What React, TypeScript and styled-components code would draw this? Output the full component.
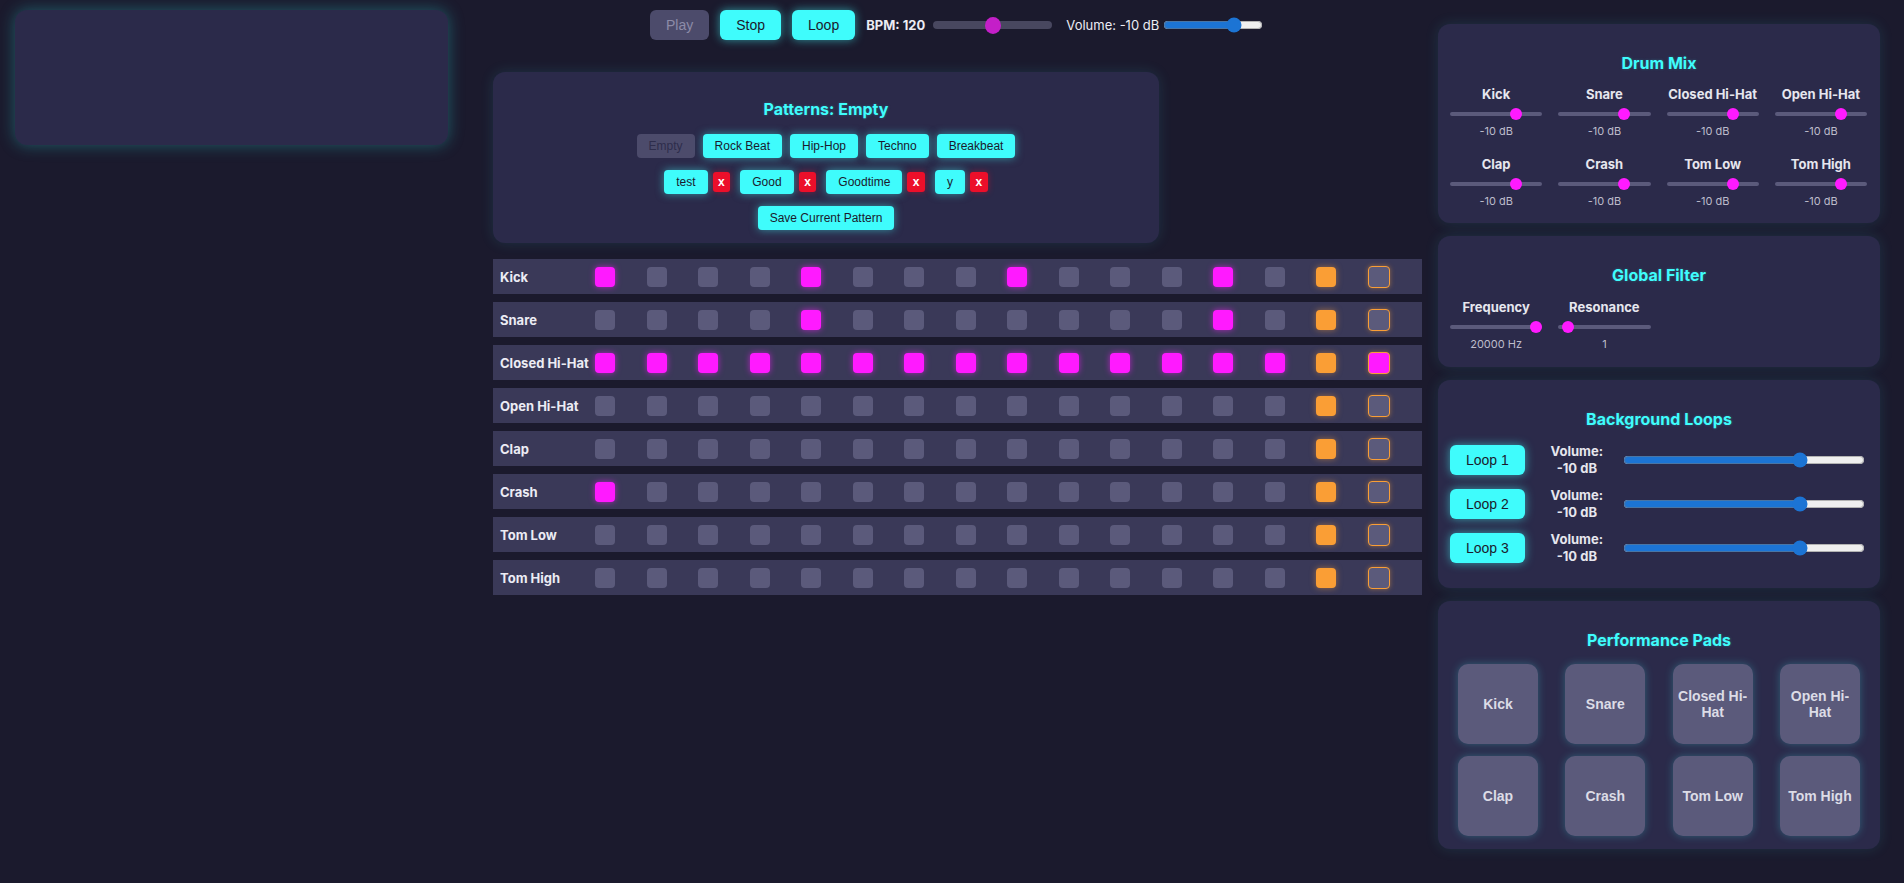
import React from "react";
import styled, { createGlobalStyle, css } from "styled-components";

const GlobalStyle = createGlobalStyle`
  html, body { margin: 0; padding: 0; background: #1b1a2d; }
  body { font-family: Inter, "Liberation Sans", sans-serif; color: #e6e6ee; }
  * { box-sizing: border-box; }
`;

const CYAN = "#3ffcfc";
const MAGENTA = "#ff1aff";
const ORANGE = "#fa9e35";

const Page = styled.div`
  display: flex;
  align-items: flex-start;
  min-height: 883px;
`;

const LeftCol = styled.div`
  flex: none;
  width: 448px;
  padding: 10px 0 0 15px;
`;

const Visualizer = styled.div`
  height: 135px;
  border-radius: 12px;
  background: #2b2a4a;
  box-shadow: 0 0 16px rgba(40, 200, 200, 0.38);
`;

const CenterCol = styled.main`
  flex: none;
  width: 929px;
  margin-left: 45px;
  padding-top: 10px;
`;

const ControlBar = styled.div`
  display: flex;
  align-items: center;
  gap: 11px;
  height: 30px;
  padding-left: 157px;
`;

const Field = styled.div<{ $gap: number; $ml?: number }>`
  display: flex;
  align-items: center;
  gap: ${(p) => p.$gap}px;
  margin-left: ${(p) => p.$ml ?? 0}px;
`;

const MainButton = styled.button<{ $off?: boolean }>`
  font-family: "Liberation Sans", Arial, sans-serif;
  font-size: 14px;
  line-height: 16px;
  padding: 7px 16px;
  border: none;
  border-radius: 6px;
  cursor: pointer;
  ${(p) =>
    p.$off
      ? css`
          background: #4c4b6b;
          color: #8d8ca8;
        `
      : css`
          background: ${CYAN};
          color: #1b1a2d;
          box-shadow: 0 0 10px rgba(63, 252, 252, 0.55);
        `}
`;

const BarLabel = styled.span<{ $bold?: boolean }>`
  font-size: 13px;
  font-weight: ${(p) => (p.$bold ? 700 : 400)};
  color: #ececf4;
  white-space: nowrap;
`;

const BpmSlider = styled.input`
  -webkit-appearance: none;
  appearance: none;
  width: 119px;
  height: 18px;
  margin: 0;
  background: transparent;
  &::-webkit-slider-runnable-track {
    height: 8px;
    border-radius: 4px;
    background: #48475f;
  }
  &::-webkit-slider-thumb {
    -webkit-appearance: none;
    width: 16px;
    height: 17px;
    margin-top: -4.5px;
    border-radius: 50%;
    background: #c41fc8;
  }
`;

const NativeSlider = styled.input<{ $w?: number }>`
  margin: 0;
  accent-color: #1c74d4;
  ${(p) => (p.$w ? `width: ${p.$w}px;` : "flex: 1; min-width: 0;")}
`;

const Panel = styled.section`
  background: #2b2a4a;
  border-radius: 12px;
  box-shadow: 0 0 14px rgba(63, 220, 230, 0.13);
`;

const PatternPanel = styled(Panel)`
  width: 666px;
  margin-top: 32px;
  padding: 25px 0 13px;
  display: flex;
  flex-direction: column;
  align-items: center;
  gap: 12px;
`;

const Title = styled.h2<{ $mb?: number }>`
  margin: 0 0 ${(p) => p.$mb ?? 0}px;
  font-size: 16px;
  line-height: 24px;
  font-weight: 700;
  text-align: center;
  color: ${CYAN};
  text-shadow: 0 0 3px rgba(63, 252, 252, 0.25);
`;

const ButtonRow = styled.div<{ $gap: number }>`
  display: flex;
  justify-content: center;
  gap: ${(p) => p.$gap}px;
`;

const PatternGroup = styled.div`
  display: flex;
  align-items: center;
  gap: 5px;
`;

const PatternButton = styled.button<{ $current?: boolean; $pad?: number }>`
  font-family: "Liberation Sans", Arial, sans-serif;
  font-size: 12px;
  line-height: 14px;
  padding: 5px ${(p) => p.$pad ?? 12}px;
  border: none;
  border-radius: 4px;
  cursor: pointer;
  ${(p) =>
    p.$current
      ? css`
          background: #4c4b6b;
          color: #2e2d4c;
        `
      : css`
          background: ${CYAN};
          color: #1b1a2d;
          box-shadow: 0 0 8px rgba(63, 252, 252, 0.5);
        `}
`;

const DeleteButton = styled.button`
  font-family: "Liberation Sans", Arial, sans-serif;
  font-size: 12px;
  font-weight: 700;
  line-height: 14px;
  padding: 3px 5.5px;
  border: none;
  border-radius: 3px;
  background: #ec0f2a;
  color: #ffffff;
  box-shadow: 0 0 6px rgba(236, 15, 42, 0.45);
`;

const Grid = styled.div`
  margin-top: 16px;
  display: flex;
  flex-direction: column;
  gap: 8px;
`;

const TrackRow = styled.div`
  display: flex;
  align-items: center;
  height: 35px;
  padding-left: 7px;
  background: #3a3958;
`;

const TrackLabel = styled.div`
  flex: none;
  width: 95px;
  font-size: 13px;
  font-weight: 700;
  color: #ececf4;
  white-space: nowrap;
`;

const Steps = styled.div`
  display: flex;
  align-items: center;
  gap: 31.5px;
`;

const Step = styled.div<{ $on: boolean; $playing: boolean; $marked: boolean }>`
  flex: none;
  width: 20px;
  height: 20px;
  border-radius: 4px;
  box-sizing: content-box;
  background: #5b5a7b;
  ${(p) =>
    p.$on &&
    css`
      background: ${MAGENTA};
      box-shadow: 0 0 6px rgba(255, 26, 255, 0.6);
    `}
  ${(p) =>
    p.$playing &&
    css`
      background: ${ORANGE};
      box-shadow: 0 0 6px rgba(250, 158, 53, 0.5);
    `}
  ${(p) =>
    p.$marked &&
    css`
      border: 1px solid ${ORANGE};
      box-shadow: 0 0 5px rgba(250, 158, 53, 0.45);
    `}
`;

const RightCol = styled.aside`
  flex: none;
  width: 442px;
  margin-left: 16px;
  padding-top: 24px;
  display: flex;
  flex-direction: column;
  gap: 13px;
`;

const SidePanel = styled(Panel)<{ $bottom?: number }>`
  padding: 27px 12px ${(p) => p.$bottom ?? 15}px;
`;

const KnobGrid = styled.div`
  display: grid;
  grid-template-columns: repeat(4, 1fr);
  column-gap: 16px;
  row-gap: 16px;
  padding-right: 1px;
`;

const Knob = styled.div`
  display: flex;
  flex-direction: column;
  align-items: center;
  gap: 4px;
`;

const KnobLabel = styled.div`
  font-size: 13px;
  line-height: 20px;
  font-weight: 700;
  color: #e6e6ee;
  white-space: nowrap;
`;

const KnobValue = styled.div`
  font-size: 11px;
  line-height: 14px;
  color: #bdbccb;
`;

const MiniSlider = styled.input`
  -webkit-appearance: none;
  appearance: none;
  width: 100%;
  height: 12px;
  margin: 0;
  background: transparent;
  &::-webkit-slider-runnable-track {
    height: 4px;
    border-radius: 2px;
    background: #5b5a7b;
  }
  &::-webkit-slider-thumb {
    -webkit-appearance: none;
    width: 12px;
    height: 12px;
    margin-top: -4px;
    border-radius: 50%;
    background: ${MAGENTA};
  }
`;

const LoopList = styled.div`
  margin-top: 12px;
  margin-bottom: 8px;
  display: flex;
  flex-direction: column;
  gap: 10px;
`;

const LoopRow = styled.div`
  display: flex;
  align-items: center;
  height: 34px;
  padding-right: 3px;
`;

const LoopVolume = styled.div`
  flex: none;
  width: 82px;
  margin: 0 5px 0 11px;
  text-align: center;
  font-size: 13px;
  line-height: 17px;
  font-weight: 700;
  color: #e6e6ee;
`;

const PadGrid = styled.div`
  margin-top: 12px;
  padding: 0 8px;
  display: grid;
  grid-template-columns: repeat(4, 80px);
  justify-content: space-between;
  row-gap: 12px;
`;

const Pad = styled.button`
  width: 80px;
  height: 80px;
  padding: 0 4px;
  border: none;
  border-radius: 10px;
  background: #5b5a7b;
  box-shadow: 0 0 8px rgba(63, 220, 230, 0.3);
  font-family: "Liberation Sans", Arial, sans-serif;
  font-size: 14px;
  font-weight: 700;
  line-height: 16px;
  color: #dcdce6;
  cursor: pointer;
`;

const DRUMS = [
  "Kick",
  "Snare",
  "Closed Hi-Hat",
  "Open Hi-Hat",
  "Clap",
  "Crash",
  "Tom Low",
  "Tom High",
];

const ACTIVE: Record<string, number[]> = {
  Kick: [0, 4, 8, 12],
  Snare: [4, 12],
  "Closed Hi-Hat": Array.from({ length: 16 }, (_, i) => i),
  "Open Hi-Hat": [],
  Clap: [],
  Crash: [0],
  "Tom Low": [],
  "Tom High": [],
};

const PRESETS = ["Rock Beat", "Hip-Hop", "Techno", "Breakbeat"];
const SAVED = ["test", "Good", "Goodtime", "y"];
const noop = () => {};

export default function App() {
  return (
    <>
      <GlobalStyle />
      <Page>
        <LeftCol>
          <Visualizer />
        </LeftCol>

        <CenterCol>
          <ControlBar>
            <MainButton $off>Play</MainButton>
            <MainButton>Stop</MainButton>
            <MainButton>Loop</MainButton>
            <Field $gap={8}>
              <BarLabel $bold>BPM: 120</BarLabel>
              <BpmSlider type="range" min={60} max={180} value={120} onChange={noop} />
            </Field>
            <Field $gap={4} $ml={3}>
              <BarLabel>Volume: -10 dB</BarLabel>
              <NativeSlider type="range" $w={100} min={-40} max={0} value={-10} onChange={noop} />
            </Field>
          </ControlBar>

          <PatternPanel>
            <Title $mb={1}>Patterns: Empty</Title>
            <ButtonRow $gap={8}>
              <PatternButton $current>Empty</PatternButton>
              {PRESETS.map((p) => (
                <PatternButton key={p}>{p}</PatternButton>
              ))}
            </ButtonRow>
            <ButtonRow $gap={10}>
              {SAVED.map((s) => (
                <PatternGroup key={s}>
                  <PatternButton>{s}</PatternButton>
                  <DeleteButton>x</DeleteButton>
                </PatternGroup>
              ))}
            </ButtonRow>
            <PatternButton $pad={12}>Save Current Pattern</PatternButton>
          </PatternPanel>

          <Grid>
            {DRUMS.map((d) => (
              <TrackRow key={d}>
                <TrackLabel>{d}</TrackLabel>
                <Steps>
                  {Array.from({ length: 16 }, (_, i) => (
                    <Step
                      key={i}
                      $on={ACTIVE[d].includes(i)}
                      $playing={i === 14}
                      $marked={i === 15}
                    />
                  ))}
                </Steps>
              </TrackRow>
            ))}
          </Grid>
        </CenterCol>

        <RightCol>
          <SidePanel>
            <Title $mb={9}>Drum Mix</Title>
            <KnobGrid>
              {DRUMS.map((d) => (
                <Knob key={d}>
                  <KnobLabel>{d}</KnobLabel>
                  <MiniSlider type="range" min={-40} max={0} value={-10} onChange={noop} />
                  <KnobValue>-10 dB</KnobValue>
                </Knob>
              ))}
            </KnobGrid>
          </SidePanel>

          <SidePanel $bottom={16}>
            <Title $mb={10}>Global Filter</Title>
            <KnobGrid>
              <Knob>
                <KnobLabel>Frequency</KnobLabel>
                <MiniSlider type="range" min={20} max={20000} value={20000} onChange={noop} />
                <KnobValue>20000 Hz</KnobValue>
              </Knob>
              <Knob>
                <KnobLabel>Resonance</KnobLabel>
                <MiniSlider type="range" min={0} max={20} value={1} onChange={noop} />
                <KnobValue>1</KnobValue>
              </Knob>
            </KnobGrid>
          </SidePanel>

          <SidePanel>
            <Title>Background Loops</Title>
            <LoopList>
              {[1, 2, 3].map((n) => (
                <LoopRow key={n}>
                  <MainButton>Loop {n}</MainButton>
                  <LoopVolume>
                    Volume:
                    <br />
                    -10 dB
                  </LoopVolume>
                  <NativeSlider type="range" min={-40} max={0} value={-10} onChange={noop} />
                </LoopRow>
              ))}
            </LoopList>
          </SidePanel>

          <SidePanel $bottom={13}>
            <Title>Performance Pads</Title>
            <PadGrid>
              {DRUMS.map((d) => (
                <Pad key={d}>{d}</Pad>
              ))}
            </PadGrid>
          </SidePanel>
        </RightCol>
      </Page>
    </>
  );
}
